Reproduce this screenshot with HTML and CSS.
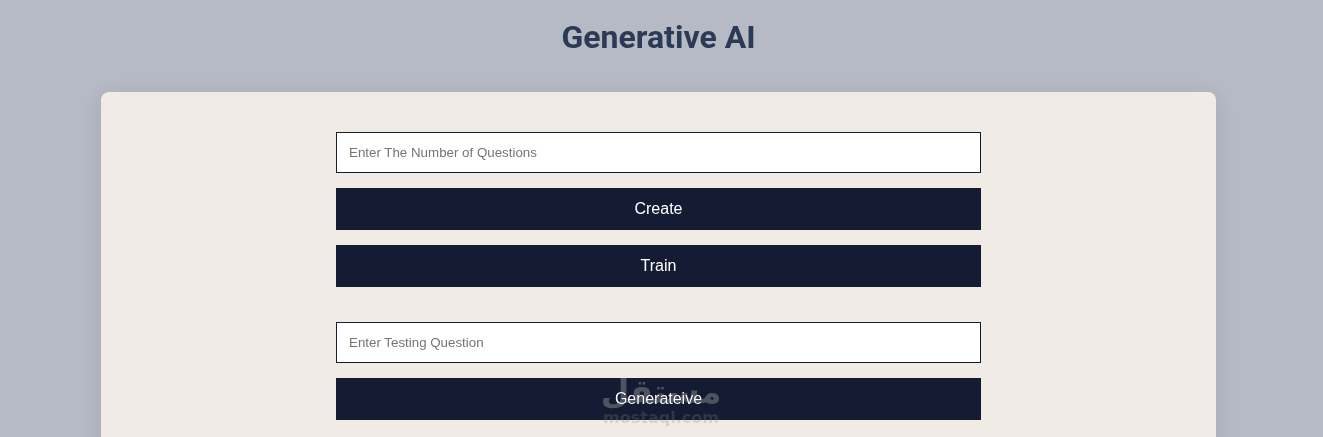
FILE: index.html
```html
<!DOCTYPE html>
<html lang="en">
<head>
<meta charset="utf-8">
<title>Generative AI</title>
<link rel="stylesheet" href="styles.css">
</head>
<body>
<main class="page">
  <h1 class="title">Generative AI</h1>
  <section class="card">
    <form class="form">
      <div class="group">
        <input class="field" type="text" placeholder="Enter The Number of Questions">
        <button class="btn" type="button">Create</button>
        <button class="btn" type="button">Train</button>
      </div>
      <div class="group">
        <input class="field" type="text" placeholder="Enter Testing Question">
        <button class="btn" type="button">Generateive</button>
      </div>
    </form>
  </section>
</main>
<div class="watermark" aria-hidden="true">
  <span class="wm-ar" dir="rtl" lang="ar">مستقل</span>
  <span class="wm-en">mostaql.com</span>
</div>
</body>
</html>
```
FILE: styles.css
```css
html, body {
  margin: 0;
  height: 437px;
  overflow: hidden;
}
body {
  background: #b5bac4;
  font-family: "Liberation Sans", Arial, sans-serif;
  position: relative;
}
.page {
  width: 1317px;
  display: flex;
  flex-direction: column;
  align-items: center;
}
.title {
  margin: 0;
  padding-top: 18px;
  height: 92px;
  box-sizing: border-box;
  font-family: Roboto, sans-serif;
  font-weight: 700;
  font-size: 32px;
  line-height: 38px;
  color: #2c3b55;
}
.card {
  width: 1115px;
  height: 500px;
  box-sizing: border-box;
  padding-top: 40px;
  background: #f0ebe5;
  border-radius: 8px;
  box-shadow: 0 4px 20px rgba(44, 59, 85, 0.12);
  display: flex;
  justify-content: center;
}
.form {
  width: 645px;
  display: flex;
  flex-direction: column;
  gap: 35px;
}
.group {
  display: flex;
  flex-direction: column;
  gap: 15px;
}
.field {
  height: 41px;
  box-sizing: border-box;
  margin: 0;
  padding: 0 12px;
  border: 1px solid #151b33;
  border-radius: 0;
  background: #fff;
  font-family: "Liberation Sans", Arial, sans-serif;
  font-size: 13.33px;
  outline: none;
}
.field::placeholder {
  color: #757575;
  opacity: 1;
}
.btn {
  height: 42px;
  margin: 0;
  border: 0;
  border-radius: 0;
  background: #151b33;
  color: #fff;
  font-family: "Liberation Sans", Arial, sans-serif;
  font-size: 16px;
}
.watermark {
  position: absolute;
  left: 581px;
  top: 373px;
  width: 160px;
  display: flex;
  flex-direction: column;
  align-items: center;
  pointer-events: none;
}
.wm-ar {
  font-family: "DejaVu Sans", sans-serif;
  font-weight: 700;
  font-size: 33px;
  line-height: 38px;
  color: #4f535f;
  mix-blend-mode: lighten;
}
.wm-en {
  margin-top: -2px;
  font-family: "DejaVu Sans", sans-serif;
  font-weight: 700;
  font-size: 16px;
  line-height: 18px;
  color: rgba(130, 130, 135, 0.25);
}
```
